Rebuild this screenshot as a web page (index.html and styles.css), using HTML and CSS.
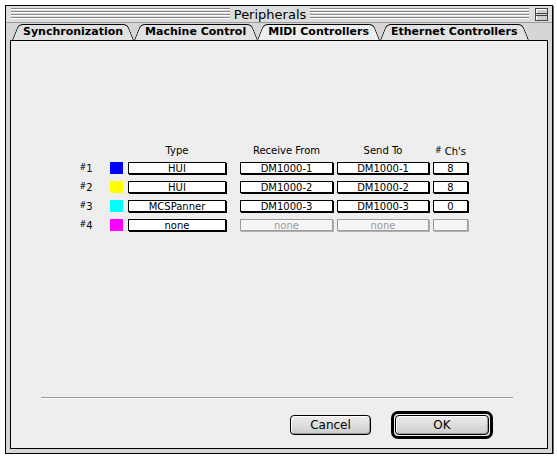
FILE: index.html
```html
<!DOCTYPE html>
<html lang="en">
<head>
    <meta charset="UTF-8">
    <title>Peripherals</title>
    <link rel="stylesheet" href="styles.css">
</head>
<body>
    <div class="window">
        <div class="titlebar">
            <span class="stripes"></span>
            <span class="title">Peripherals</span>
            <span class="stripes"></span>
            <span class="collapse"><span></span></span>
        </div>
        <div class="frame">
            <div class="tabs">
                <div class="tab">Synchronization</div>
                <div class="tab">Machine Control</div>
                <div class="tab active">MIDI Controllers</div>
                <div class="tab">Ethernet Controllers</div>
            </div>
            <div class="panel">
                <div class="table">
                    <div class="row head">
                        <span class="num"></span>
                        <span class="swatch none"></span>
                        <span class="col type">Type</span>
                        <span class="col recv">Receive From</span>
                        <span class="col send">Send To</span>
                        <span class="col ch"><span class="hash">#</span> Ch's</span>
                    </div>
                    <div class="row">
                        <span class="num"><span class="hash">#</span>1</span>
                        <span class="swatch blue"></span>
                        <span class="box type">HUI</span>
                        <span class="box recv">DM1000-1</span>
                        <span class="box send">DM1000-1</span>
                        <span class="box ch">8</span>
                    </div>
                    <div class="row">
                        <span class="num"><span class="hash">#</span>2</span>
                        <span class="swatch yellow"></span>
                        <span class="box type">HUI</span>
                        <span class="box recv">DM1000-2</span>
                        <span class="box send">DM1000-2</span>
                        <span class="box ch">8</span>
                    </div>
                    <div class="row">
                        <span class="num"><span class="hash">#</span>3</span>
                        <span class="swatch cyan"></span>
                        <span class="box type">MCSPanner</span>
                        <span class="box recv">DM1000-3</span>
                        <span class="box send">DM1000-3</span>
                        <span class="box ch">0</span>
                    </div>
                    <div class="row">
                        <span class="num"><span class="hash">#</span>4</span>
                        <span class="swatch magenta"></span>
                        <span class="box type">none</span>
                        <span class="box recv off">none</span>
                        <span class="box send off">none</span>
                        <span class="box ch off"></span>
                    </div>
                </div>
                <div class="footer">
                    <div class="separator"></div>
                    <div class="buttons">
                        <button class="btn">Cancel</button>
                        <div class="ring"><button class="btn ok">OK</button></div>
                    </div>
                </div>
            </div>
        </div>
    </div>
</body>
</html>
```

FILE: styles.css
```css
body {
    margin: 0;
    background-color: #ffffff;
    font-family: "DejaVu Sans", sans-serif;
}
.window {
    margin: 5px 0 0 5px;
    width: 546px;
    height: 447px;
    border: 1px solid #000000;
    background-color: #d6d6d6;
    box-shadow: 1px 1px 0 #777777;
}

/* barra de titulo */
.titlebar {
    height: 17px;
    display: flex;
    align-items: center;
    padding: 0 4px 0 5px;
    background-color: #dddddd;
    border-bottom: 1px solid #9a9a9a;
    box-sizing: border-box;
}
.stripes {
    flex: 1;
    height: 12px;
    background: repeating-linear-gradient(#888888 0, #888888 1px, #ffffff 1px, #ffffff 2px, #dddddd 2px, #dddddd 3px);
}
.title {
    padding: 0 4px;
    font-size: 13px;
    color: #000000;
    line-height: 15px;
}
.collapse {
    margin-left: 6px;
    width: 11px;
    height: 11px;
    border: 1px solid #444444;
    background-color: #cfcfcf;
    box-shadow: inset 1px 1px 0 #ffffff;
    display: flex;
    align-items: center;
}
.collapse span {
    display: block;
    width: 100%;
    height: 3px;
    border-top: 1px solid #444444;
    border-bottom: 1px solid #444444;
    box-sizing: border-box;
}

.frame {
    padding: 0 4px 4px 4px;
}

/* pestanas */
.tabs {
    display: flex;
    height: 17px;
    padding-left: 2px;
}
.tab {
    position: relative;
    z-index: 0;
    padding: 0 11px;
    font-size: 11px;
    font-weight: bold;
    line-height: 18px;
    color: #000000;
}
.tab::before,
.tab::after {
    content: "";
    position: absolute;
    top: 1px;
    bottom: 0;
    width: 55%;
    z-index: -1;
    background-color: #e2e2e2;
    border-top: 1px solid #000000;
}
.tab::before {
    left: 0;
    border-left: 1px solid #000000;
    border-top-left-radius: 5px;
    transform: skewX(-22deg);
    transform-origin: bottom left;
}
.tab::after {
    right: 0;
    border-right: 1px solid #000000;
    border-top-right-radius: 5px;
    transform: skewX(22deg);
    transform-origin: bottom right;
}
.tab.active::before,
.tab.active::after {
    background-color: #eeeeee;
}

.panel {
    height: 407px;
    border: 1px solid #000000;
    background-color: #eeeeee;
    display: flex;
    flex-direction: column;
}

/* tabla de controladores */
.table {
    margin-top: 104px;
    padding-left: 65px;
    font-size: 10px;
}
.row {
    display: flex;
    align-items: center;
    height: 12px;
    margin-bottom: 7px;
}
.row.head {
    margin-bottom: 5px;
}
.num {
    width: 20px;
    text-align: center;
}
.hash {
    font-size: 8px;
    vertical-align: 2px;
}
.swatch {
    width: 13px;
    height: 12px;
    margin-left: 14px;
}
.swatch.blue { background-color: #0000ff; }
.swatch.yellow { background-color: #ffff00; }
.swatch.cyan { background-color: #00ffff; }
.swatch.magenta { background-color: #ff00ff; }
.col,
.box {
    box-sizing: border-box;
    text-align: center;
    height: 12px;
    line-height: 11px;
}
.box {
    background-color: #ffffff;
    border: 1px solid #000000;
    box-shadow: 1px 1px 0 #000000;
}
.box.off {
    border-color: #9c9c9c;
    box-shadow: 1px 1px 0 #b0b0b0;
    color: #999999;
    background-color: #f6f6f6;
}
.type { width: 98px; margin-left: 5px; }
.recv { width: 93px; margin-left: 14px; }
.send { width: 92px; margin-left: 4px; }
.ch { width: 35px; margin-left: 4px; }

/* pie con botones */
.footer {
    margin-top: auto;
    padding-bottom: 9px;
}
.separator {
    height: 1px;
    margin: 0 34px 0 30px;
    background-color: #9a9a9a;
    border-bottom: 1px solid #ffffff;
}
.buttons {
    display: flex;
    justify-content: flex-end;
    align-items: center;
    margin-top: 12px;
    padding-right: 54px;
    gap: 20px;
}
.btn {
    font-family: "DejaVu Sans", sans-serif;
    font-size: 12px;
    color: #000000;
    width: 81px;
    height: 20px;
    padding: 0;
    border: 1px solid #000000;
    border-radius: 4px;
    background: linear-gradient(#eeeeee, #cccccc);
    box-shadow: inset 1px 1px 0 #ffffff, inset -1px -1px 0 #999999;
}
.ring {
    border: 3px solid #000000;
    border-radius: 7px;
    padding: 1px;
    display: flex;
}
.btn.ok {
    width: 94px;
}
```
